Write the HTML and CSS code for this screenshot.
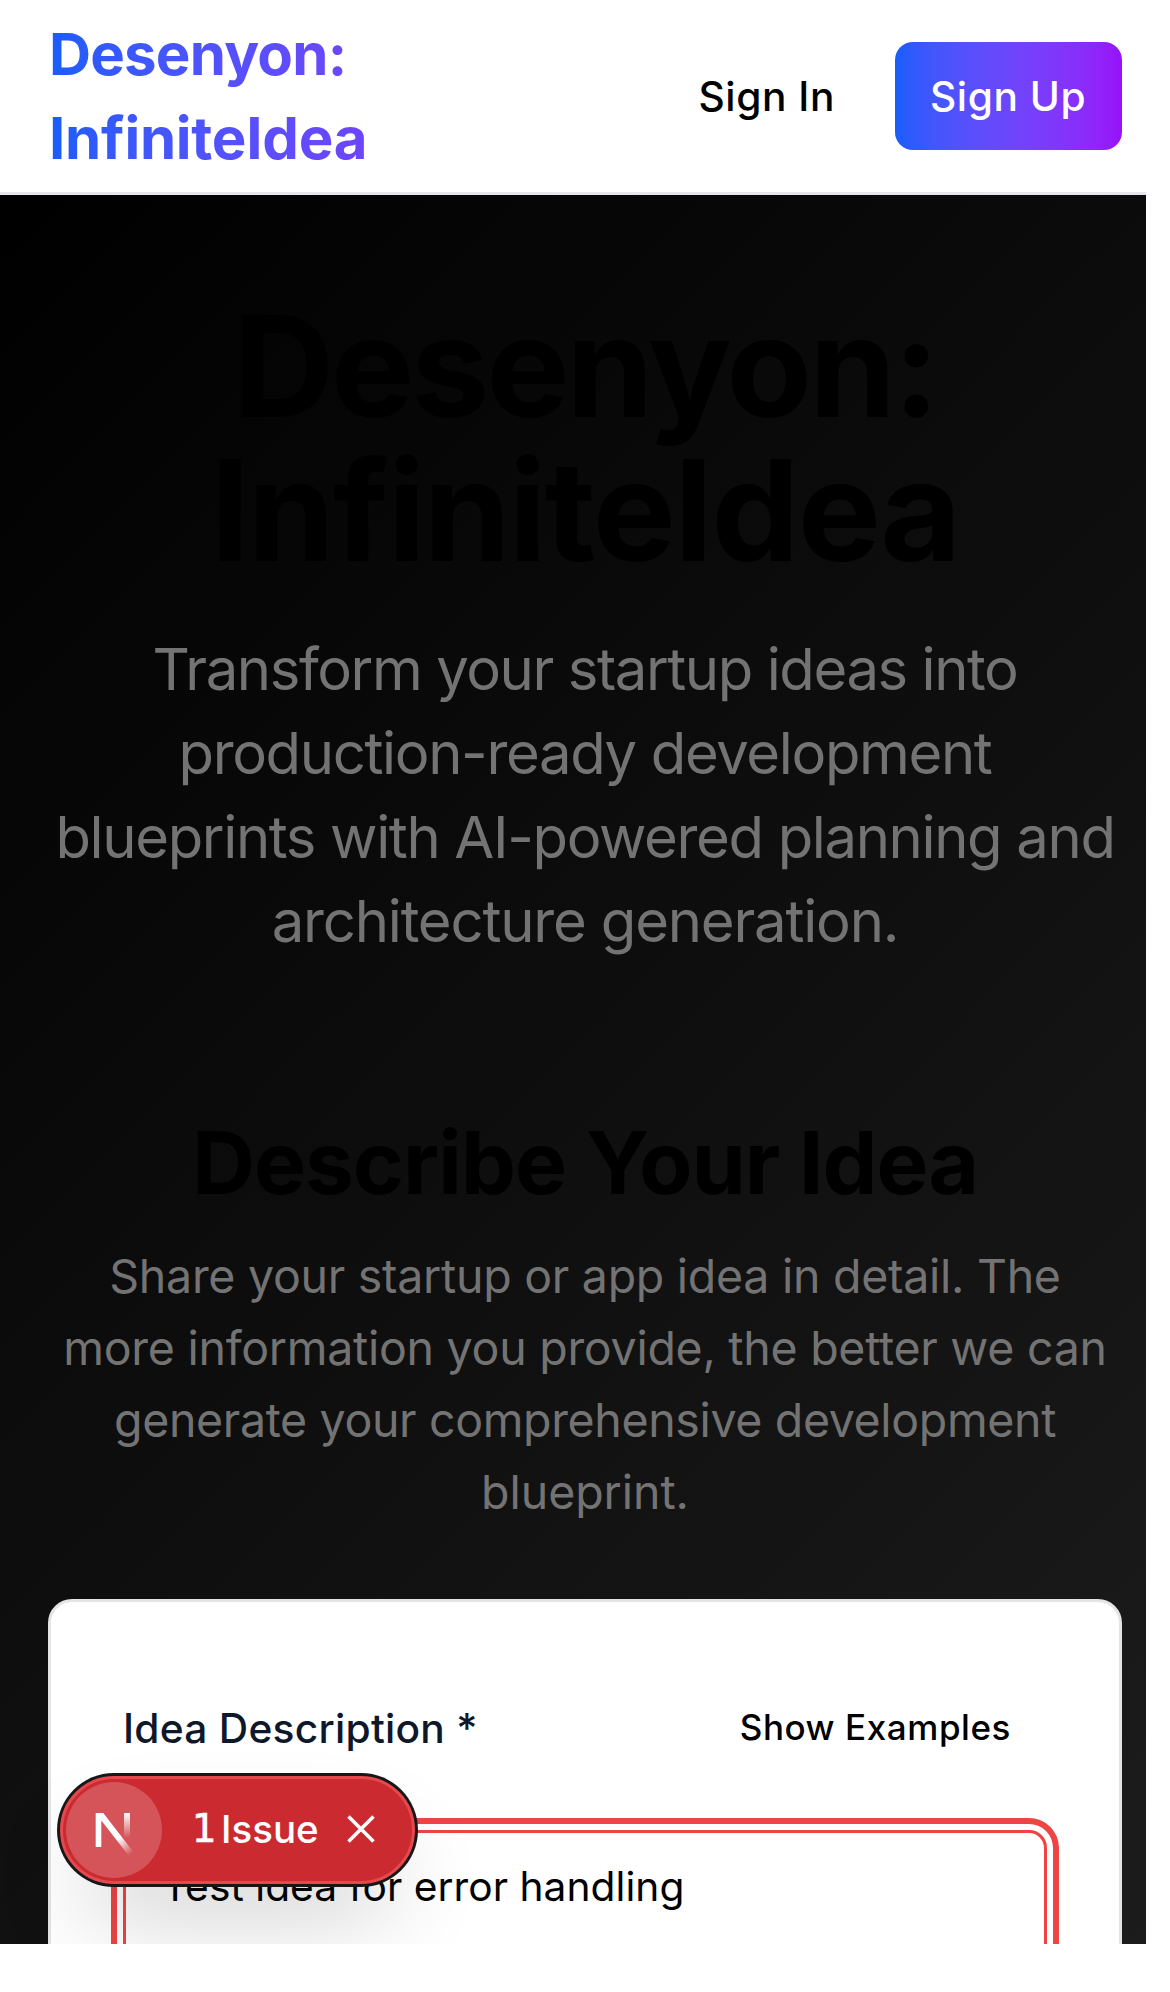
FILE: index.html
```html
<!DOCTYPE html>
<html lang="en">
<head>
<meta charset="utf-8">
<title>Desenyon: InfiniteIdea</title>
<link rel="stylesheet" href="styles.css">
</head>
<body>
<div class="viewport">
  <header class="header">
    <div class="brand"><span class="brand-top">Desenyon:</span><span class="brand-bottom">InfiniteIdea</span></div>
    <nav class="nav">
      <a class="btn btn-ghost">Sign In</a>
      <a class="btn btn-primary">Sign Up</a>
    </nav>
  </header>
  <main class="main">
    <section class="hero">
      <h1><span class="title-top">Desenyon:</span><span class="title-bottom">InfiniteIdea</span></h1>
      <p><span class="snug">Transform your startup ideas into</span><br>production-ready development<br>blueprints with AI-powered planning and<br><span class="looser">architecture generation.</span></p>
    </section>
    <section class="intro">
      <h2>Describe Your Idea</h2>
      <p>Share your startup or app idea in detail. The<br>more information you provide, the better we can<br><span class="tighter">generate your comprehensive development</span><br><span class="looser">blueprint.</span></p>
    </section>
    <section class="card">
      <div class="field-head">
        <label class="label">Idea Description *</label>
        <a class="examples">Show Examples</a>
      </div>
      <div class="textarea">Test idea for error handling</div>
    </section>
  </main>
  <div class="issue-badge">
    <svg class="badge-logo" viewBox="0 0 96 96">
      <defs>
        <linearGradient id="diag" gradientUnits="userSpaceOnUse" x1="53" y1="56" x2="65.5" y2="72">
          <stop offset="0" stop-color="#fff"/><stop offset="1" stop-color="#fff" stop-opacity="0"/>
        </linearGradient>
        <linearGradient id="stem" gradientUnits="userSpaceOnUse" x1="61" y1="31" x2="61" y2="56">
          <stop offset="0" stop-color="#fff"/><stop offset="1" stop-color="#fff" stop-opacity="0"/>
        </linearGradient>
      </defs>
      <circle cx="48" cy="48" r="48" fill="#fff" fill-opacity=".2"/>
      <rect x="58" y="31" width="6" height="26" fill="url(#stem)"/>
      <path d="M29.7 65V31h7.6L67 69.5l-4 4.6L35.3 38.5V65z" fill="url(#diag)"/>
    </svg>
    <span class="count">1</span>
    <span class="issue-text">Issue</span>
    <svg class="close" viewBox="0 0 28 28"><path d="M1.5 1.5l25 25M26.5 1.5l-25 25" stroke="#fff" stroke-width="3.6" fill="none"/></svg>
  </div>
</div>
</body>
</html>
```
FILE: styles.css
```css
* { box-sizing: border-box; }
body { margin: 0; background: #fff; font-family: Inter, "Liberation Sans", sans-serif; color: #000; }
h1, h2, p { margin: 0; }

.viewport { position: relative; width: 1170px; height: 1944px; overflow: hidden; }

.header {
  display: flex; align-items: center;
  width: 1146px; height: 195px; padding: 0 24px 0 48px;
  background: #fff; border-bottom: 3px solid #e5e7eb;
}
.brand {
  flex: 1; padding-left: 1px; font-size: 58.2px; line-height: 84px; font-weight: 700;
  background: linear-gradient(to right in oklab, #155dfc, #9810fa);
  -webkit-background-clip: text; background-clip: text; color: transparent;
}
.brand span, h1 span { display: block; }
.brand-top { letter-spacing: -.8px; }
.brand-bottom { letter-spacing: -.27px; }
.nav { display: flex; gap: 24px; }
.btn {
  height: 108px; padding: 0 36px; border-radius: 18px;
  font-size: 40.7px; line-height: 109px; font-weight: 500; letter-spacing: .55px; white-space: nowrap;
}
.btn-primary { width: 227px; padding: 0 35px; color: #fff; background: linear-gradient(to right in oklab, #155dfc, #9810fa); }

.main {
  width: 1146px; height: 1749px; padding: 100px 24px 0 48px;
  background: linear-gradient(135deg, #000, #1c1c1c);
}
.hero, .intro { text-align: center; white-space: nowrap; }
.hero h1 { font-size: 139.6px; line-height: 144px; font-weight: 700; }
.title-top { letter-spacing: -3px; }
.title-bottom { letter-spacing: -1.83px; }
.hero p { margin-top: 44px; font-size: 58px; line-height: 84px; letter-spacing: -1.36px; color: #737373; }
.hero .looser { letter-spacing: -1.19px; }
.hero .snug { letter-spacing: -1.42px; }

.intro { margin-top: 146px; }
.intro h2 { font-size: 87.2px; line-height: 108px; font-weight: 700; letter-spacing: -.95px; }
.intro p { margin-top: 23px; font-size: 46.5px; line-height: 72px; letter-spacing: -.275px; color: #737373; }
.intro .tighter { letter-spacing: -.355px; }
.intro .looser { letter-spacing: -.05px; }

.card {
  height: 500px; margin-top: 71px; padding: 72px;
  background: #fff; border: 3px solid #e4e4e7; border-radius: 24px;
}
.field-head { display: flex; align-items: center; justify-content: space-between; height: 108px; }
.label { font-size: 40.7px; font-weight: 500; letter-spacing: .26px; color: #0f172a; }
.examples { padding: 0 36px 2px 0; font-size: 35px; font-weight: 500; letter-spacing: .56px; }
.textarea {
  height: 300px; margin-top: 48px; padding: 24px 36px;
  border: 3px solid #ef4444; border-radius: 18px;
  box-shadow: 0 0 0 6px #fff, 0 0 0 12px #ef4444;
  font-size: 40.7px; line-height: 60px; letter-spacing: .04px;
}

.issue-badge {
  position: absolute; left: 60px; top: 1776px; width: 355px; height: 108px;
  display: flex; align-items: center; padding-left: 3px;
  background: #ca2a30; border: 3px solid #e5484d; border-radius: 54px;
  box-shadow: 0 0 0 3px #171717, 0 48px 96px -24px rgba(0, 0, 0, .24);
  color: #fff; font-size: 38.5px; line-height: 48px; font-weight: 500;
}
.badge-logo { width: 96px; height: 96px; }
.count {
  width: 27px; margin-left: 30px; padding-bottom: 2px;
  font-family: "DejaVu Sans", sans-serif; font-weight: 400; -webkit-text-stroke: .7px #fff;
}
.issue-text { width: 98px; margin-left: 2px; padding-bottom: 3px; }
.close { width: 28px; height: 28px; margin: 0 0 2px 28px; }
```
